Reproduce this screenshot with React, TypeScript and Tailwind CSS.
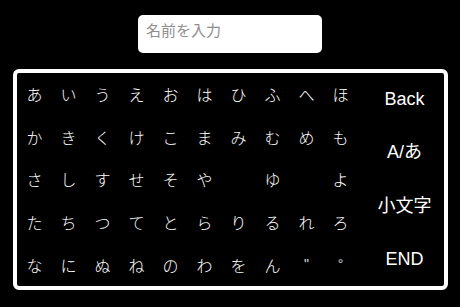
const rows: string[][] = [
  ["あ", "い", "う", "え", "お", "は", "ひ", "ふ", "へ", "ほ"],
  ["か", "き", "く", "け", "こ", "ま", "み", "む", "め", "も"],
  ["さ", "し", "す", "せ", "そ", "や", "", "ゆ", "", "よ"],
  ["た", "ち", "つ", "て", "と", "ら", "り", "る", "れ", "ろ"],
  ["な", "に", "ぬ", "ね", "の", "わ", "を", "ん", '"', "°"],
];

const actions = ["Back", "A/あ", "小文字", "END"];

const App = (): JSX.Element => {
  return (
    <main
      className="flex h-[307px] w-[460px] flex-col items-center bg-black pt-[15px]"
      style={{ fontFamily: '"Noto Sans CJK JP", "Liberation Sans", sans-serif' }}
    >
      <div className="flex h-[38px] w-[184px] items-start rounded-[5px] bg-white px-[8px] pt-[5px]">
        <span className="text-[15px] leading-[20px] text-[#8e8e8e]">名前を入力</span>
      </div>
      <div className="mt-[16px] flex h-[221px] w-[435px] rounded-[6px] border-4 border-white">
        <div className="ml-[1px] grid h-full w-[340px] grid-rows-5">
          {rows.map((row, r) => (
            <div key={r} className="grid grid-cols-10">
              {row.map((ch, c) => {
                const mark = ch === '"' || ch === "°";
                return (
                  <div
                    key={c}
                    className={
                      mark
                        ? "flex items-center justify-center text-[14px] text-[#dddddd]"
                        : "flex items-center justify-center text-[16px] font-light text-white"
                    }
                    style={mark ? { fontFamily: '"Liberation Sans", sans-serif' } : undefined}
                  >
                    {ch}
                  </div>
                );
              })}
            </div>
          ))}
        </div>
        <div className="ml-[8px] grid h-full flex-1 grid-rows-4">
          {actions.map((label) => (
            <div
              key={label}
              className="flex items-center justify-center text-[18px] text-white"
              style={{ fontFamily: '"Liberation Sans", "Noto Sans CJK JP", sans-serif' }}
            >
              {label}
            </div>
          ))}
        </div>
      </div>
    </main>
  );
};

export default App;
